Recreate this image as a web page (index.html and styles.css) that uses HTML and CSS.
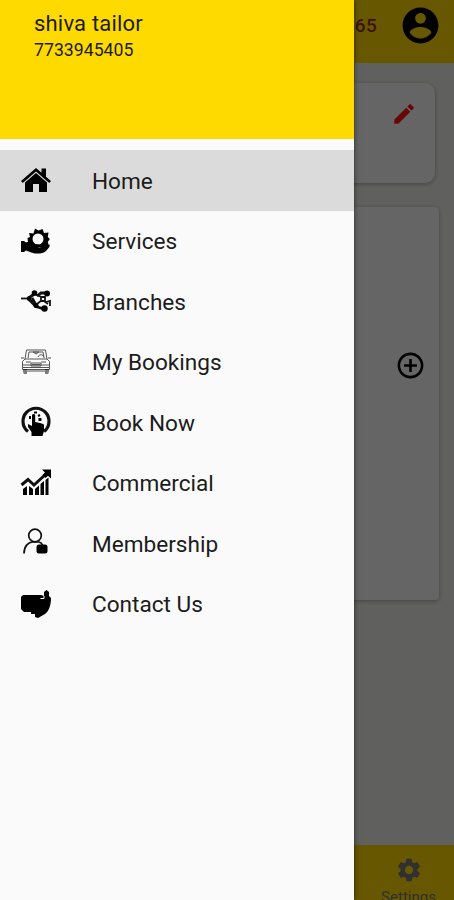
FILE: index.html
```
<!DOCTYPE html>
<html lang="en">
<head>
    <meta charset="UTF-8">
    <meta name="viewport" content="width=device-width, initial-scale=1">
    <title>Home</title>
    <link rel="stylesheet" href="styles.css">
</head>
<body>
    <div class="app">
        <header class="topbar">
            <span class="points">65</span>
            <svg class="account" viewBox="0 0 24 24"><path d="M12 2C6.48 2 2 6.48 2 12s4.480 10 10 10 10-4.480 10-10S17.520 2 12 2zm0 3c1.660 0 3 1.340 3 3s-1.340 3-3 3-3-1.340-3-3 1.340-3 3-3zm0 14.200c-2.500 0-4.710-1.280-6-3.220.03-1.990 4-3.080 6-3.080 1.990 0 5.970 1.090 6 3.080-1.290 1.940-3.500 3.220-6 3.220z"/></svg>
        </header>
        <main class="content">
            <section class="card card-profile">
                <svg class="edit" viewBox="0 0 24 24"><path d="M3 17.250V21h3.750L17.810 9.940l-3.750-3.750L3 17.250zM20.710 7.040c.39-.39.39-1.020 0-1.410l-2.340-2.340c-.39-.39-1.020-.39-1.410 0l-1.830 1.830 3.750 3.750 1.830-1.830z"/></svg>
            </section>
            <section class="card card-cars">
                <svg class="add" viewBox="0 0 24 24"><path d="M13 7h-2v4H7v2h4v4h2v-4h4v-2h-4V7zm-1-5C6.480 2 2 6.480 2 12s4.480 10 10 10 10-4.480 10-10S17.520 2 12 2zm0 18c-4.410 0-8-3.590-8-8s3.590-8 8-8 8 3.590 8 8-3.590 8-8 8z"/></svg>
            </section>
        </main>
        <footer class="bottombar">
            <div class="tab">
                <svg viewBox="0 0 24 24"><path d="M19.14 12.94c.04-.3.06-.61.06-.94 0-.32-.02-.64-.07-.94l2.03-1.58c.18-.14.23-.41.12-.61l-1.92-3.32c-.12-.22-.37-.29-.59-.22l-2.39.96c-.5-.38-1.03-.7-1.62-.94l-.36-2.54c-.04-.24-.24-.41-.48-.41h-3.84c-.24 0-.43.17-.47.41l-.36 2.54c-.59.24-1.13.57-1.62.94l-2.39-.96c-.22-.08-.47 0-.59.22L2.74 8.87c-.12.21-.08.47.12.61l2.03 1.58c-.05.3-.09.63-.09.94s.02.64.07.94l-2.03 1.58c-.18.14-.23.41-.12.61l1.92 3.32c.12.22.37.29.59.22l2.39-.96c.5.38 1.03.7 1.62.94l.36 2.54c.05.24.24.41.48.41h3.84c.24 0 .44-.17.47-.41l.36-2.54c.59-.24 1.13-.56 1.62-.94l2.39.96c.22.08.47 0 .59-.22l1.92-3.32c.12-.22.07-.47-.12-.61l-2.01-1.58zM12 15.6c-1.98 0-3.6-1.62-3.6-3.6s1.62-3.6 3.6-3.6 3.6 1.62 3.6 3.6-1.62 3.6-3.6 3.6z"/></svg>
                <span>Settings</span>
            </div>
        </footer>
    </div>

    <div class="scrim"></div>

    <nav class="drawer">
        <div class="user">
            <div class="user-name">shiva tailor</div>
            <div class="user-phone">7733945405</div>
        </div>
        <ul class="menu">
            <li class="active">
                <svg viewBox="0 0 32 32">
                    <path d="M1 17 16 4l5.500 4.800V4.500h4.500v8.200L31 17l-1.800 2L16 7.600 2.800 19z"/>
                    <path d="M5 18.500 16 9l11 9.500V28h-8v-8h-6v8H5z"/>
                </svg>
                <span>Home</span>
            </li>
            <li>
                <svg viewBox="0 0 32 32">
                    <path fill-rule="evenodd" d="M8 17l-.5-4 2.500-1-1-4 4.500.5L15 3.500l3.500 2L22.500 4l1.500 4 4.500-.5-.7 4.500 2 2-2 3 1 3.500-4 1.500H11zM18 8.500a5.500 5.500 0 1 0 0 11 5.500 5.500 0 0 0 0-11z"/>
                    <path d="M1 16h3l2 1.500c3-1 5 0 7 2h5c2 0 2 2.500 0 3 4 .5 7-3 11-3 2 1-.5 4-3 6.500-2 2-5 2.500-9 2.500-5 0-7-2-11-3l-2 1.500H1z"/>
                </svg>
                <span>Services</span>
            </li>
            <li>
                <svg viewBox="0 0 32 32">
                    <path class="line" d="M1 13.500h8" stroke-width="1.800"/>
                    <path class="line" d="M8 13.500 15 8.500M17 11l4-3h6M8 13.500l8 8 8 2.500M12 13l4 7" stroke-width="2.800"/>
                    <path class="line" d="M14 9l8 3h3v4h-4v-4M24 16l4 3M17 19l5-4M26 17l4-1v5" stroke-width="1.800"/>
                    <circle cx="14.500" cy="8" r="2.800"/>
                    <circle cx="27" cy="8.500" r="3"/>
                    <circle cx="24.500" cy="23.500" r="3.200"/>
                    <circle cx="9" cy="13.500" r="2.200"/>
                    <circle cx="16" cy="20.500" r="2.500"/>
                </svg>
                <span>Branches</span>
            </li>
            <li>
                <svg class="car" viewBox="0 0 32 32">
                    <path class="line" d="M5 13 6.500 4h19L27 13M5 13h22l2.500 2.500v8h-27v-8zM2.500 19h27M1 12h3M28 12h3"/>
                    <path class="line" d="M8 12l1-6h14l1 6M13 6h6l-3 2zM18 11c1-3 5-3 6 0M6 16h5M21 16h5M11 17h10v3H11zM3 21.500h26M12 18.500h8"/>
                    <path d="M3 23h4v5H4l-1-2zM25 23h4v3l-1 2h-3z" fill-opacity=".5"/>
                    <path class="line" d="M7 25h18"/>
                </svg>
                <span>My Bookings</span>
            </li>
            <li>
                <svg viewBox="0 0 32 32">
                    <path class="line" d="M8 25.500a13 13 0 1 1 16 0" stroke-width="3.200"/>
                    <path d="M12 9.500c0-2 3.200-2 3.200 0V16l2.300.5 2.500.5 2.500.8 1.500 1V25l-1.500 5H11.500V26L8 21v-3l4 2z"/>
                    <path d="M14 5.500h3v2h-3zM17.500 9l2-1 1 2-2 1zM18.500 12h3v3h-3zM9 10h2v3H9z"/>
                </svg>
                <span>Book Now</span>
            </li>
            <li>
                <svg viewBox="0 0 32 32">
                    <path class="line" d="M1.500 18 8 12.500l6 5.500L26 7" stroke-width="3"/>
                    <path d="M22 2.500h9v9l-3-2.800-2.500 2.300-3-3L25 5.500z"/>
                    <path d="M3 22l4-3v9H3zM9 19l4 3v6H9zM15 22l4-3.500V28h-4zM20.500 17l3.500-3v14h-3.500zM25.500 13l3-2.500V28h-3z"/>
                </svg>
                <span>Commercial</span>
            </li>
            <li>
                <svg viewBox="0 0 32 32">
                    <circle class="line" cx="15" cy="8.500" r="6.300" stroke-width="1.700"/>
                    <path class="line" d="M4 26.500c0-7 4-11.500 9-11.500h6c2 .5 3 1.500 3.500 3" stroke-width="1.700"/>
                    <rect x="16.500" y="17.500" width="11" height="9" rx="2.500"/>
                </svg>
                <span>Membership</span>
            </li>
            <li>
                <svg viewBox="0 0 32 32">
                    <path d="M3 7h18l3 1V4l2.500-2L29 4v4l2 2c0 7-2 13-6 16l-7 4-3-1v-3h-4v-2H4l-3-3V9z"/>
                    <path class="cut" d="M20.500 10.500h3.500V8"/>
                </svg>
                <span>Contact Us</span>
            </li>
        </ul>
    </nav>
</body>
</html>
```
FILE: styles.css
```
* {
    box-sizing: border-box;
}
body {
    margin: 0;
    height: 900px;
    position: relative;
    overflow: hidden;
    font-family: Roboto, "Liberation Sans", sans-serif;
    color: #1c1c1c;
}
svg {
    display: block;
    flex: none;
}
.app {
    display: flex;
    flex-direction: column;
    height: 900px;
    background: #f0f0ea;
}
.topbar {
    display: flex;
    align-items: center;
    justify-content: flex-end;
    gap: 22px;
    height: 63px;
    padding: 0 12px 12px 0;
    background: #ffda00;
}
.points {
    font-size: 19px;
    font-weight: 500;
    letter-spacing: 0.3px;
    color: #9c3020;
}
.account {
    width: 43px;
    height: 43px;
}
.content {
    flex: 1;
    padding: 20px 15px 0;
}
.card {
    display: flex;
    justify-content: flex-end;
    background: #fcfcfc;
    box-shadow: 0 1px 4px rgba(0, 0, 0, 0.3);
}
.card-profile {
    height: 100px;
    margin: 0 4px;
    padding: 18px 18px;
    border-radius: 10px;
}
.edit {
    width: 26px;
    height: 26px;
    fill: #ff1010;
}
.card-cars {
    height: 393px;
    margin-top: 24px;
    padding-right: 13px;
    align-items: center;
    border-radius: 4px;
}
.add {
    width: 31px;
    height: 31px;
    margin-bottom: 76px;
}
.bottombar {
    display: flex;
    justify-content: flex-end;
    height: 55px;
    background: #ffda00;
    overflow: hidden;
}
.tab {
    display: flex;
    flex-direction: column;
    align-items: center;
    width: 91px;
    padding-top: 11px;
    font-size: 15px;
    line-height: 18px;
    color: #787878;
}
.tab svg {
    width: 28px;
    height: 28px;
    margin-bottom: 4px;
    fill: #787878;
}
.scrim {
    position: absolute;
    inset: 0;
    background: rgba(0, 0, 0, 0.6);
}
.drawer {
    position: absolute;
    top: 0;
    left: 0;
    width: 354px;
    height: 900px;
    background: #fafafa;
    box-shadow: 0 0 5px rgba(0, 0, 0, 0.6);
}
.user {
    height: 139px;
    padding: 10px 34px;
    background: #ffda00;
}
.user-name {
    font-size: 22px;
    line-height: 27px;
    letter-spacing: 0.2px;
}
.user-phone {
    font-size: 17.7px;
    line-height: 26px;
}
.menu {
    list-style: none;
    margin: 0;
    padding: 11px 0 0;
}
.menu li {
    display: flex;
    align-items: center;
    gap: 40px;
    height: 60.5px;
    padding-left: 20px;
    font-size: 22.6px;
}
.menu span {
    padding-top: 2px;
}
.menu svg {
    width: 32px;
    height: 32px;
}
.menu .active {
    background: #dbdbdb;
}
.line {
    fill: none;
    stroke: #111;
}
.cut {
    fill: none;
    stroke: #fafafa;
}
.car .line {
    stroke: #555;
}
```
